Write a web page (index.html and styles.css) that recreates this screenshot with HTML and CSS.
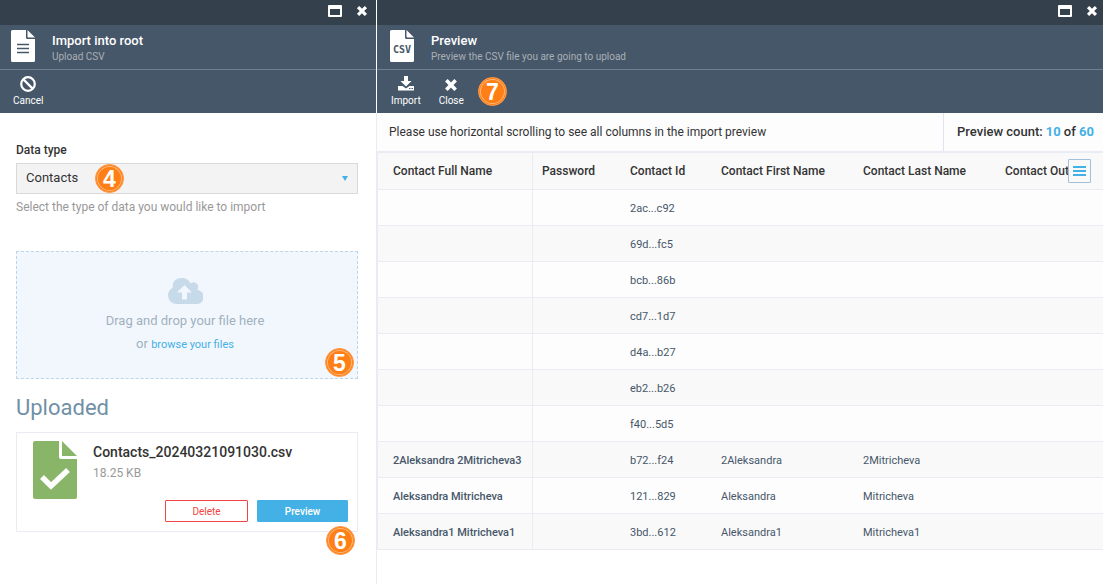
FILE: index.html
```html
<!DOCTYPE html>
<html lang="en">
<head>
<meta charset="utf-8">
<meta name="viewport" content="width=device-width, initial-scale=1">
<title>Import into root</title>
<link rel="stylesheet" href="styles.css">
</head>
<body>
<main class="blades">
  <section class="blade blade-import">
    <header class="blade-head">
      <div class="window-bar">
        <button class="window-btn" type="button" aria-label="Maximize"><svg width="14" height="12" viewBox="0 0 14 12"><path fill="#fff" fill-rule="evenodd" d="M1 0H13Q14 0 14 1V11Q14 12 13 12H1Q0 12 0 11V1Q0 0 1 0ZM2 4V10H12V4Z"/></svg></button>
        <button class="window-btn" type="button" aria-label="Close"><svg width="12" height="12" viewBox="0 0 12 12"><path d="M3.200 3.200L8.800 8.800M8.800 3.200L3.200 8.800" stroke="#fff" stroke-width="3.200" stroke-linecap="square"/></svg></button>
      </div>
      <div class="title-row">
        <svg class="doc-icon" width="24" height="32" viewBox="0 0 24 32"><path fill="#fff" d="M1.500 0H15V7.500Q15 9 16.500 9H24V30.500Q24 32 22.500 32H1.500Q0 32 0 30.500V1.500Q0 0 1.500 0ZM16.500 0L24 7.500H17.500Q16.500 7.500 16.500 6.500Z"/><path d="M6 14.500H18M6 18.500H18M6 22.500H18" stroke="#465769" stroke-width="1.500"/></svg>
        <div class="titles">
          <h1 class="title">Import into root</h1>
          <p class="subtitle">Upload CSV</p>
        </div>
      </div>
      <div class="toolbar">
        <button class="tool" type="button"><svg width="16" height="16" viewBox="0 0 16 16"><circle cx="8" cy="8" r="6.800" fill="none" stroke="#fff" stroke-width="2.200"/><path d="M3.400 3.400L12.600 12.600" stroke="#fff" stroke-width="2.200"/></svg>Cancel</button>
      </div>
    </header>
    <div class="import-body">
      <label class="field-label" for="data-type">Data type</label>
      <div class="select-wrap">
        <select id="data-type" class="select"><option>Contacts</option></select>
        <svg class="caret" width="6" height="5" viewBox="0 0 6 5"><path fill="#43b0e6" d="M0 0H6L3 5Z"/></svg>
        <span class="badge badge-4">4</span>
      </div>
      <p class="hint">Select the type of data you would like to import</p>
      <div class="dropzone">
        <svg width="35" height="26" viewBox="0 0 35 26"><path fill="#c7daea" d="M8.500 26A8.500 8.500 0 0 1 4.600 10Q4 0 14 0Q20 0 22.600 5.500Q25 3.700 27.500 4.700Q31.500 6.500 29.500 12A7 7 0 0 1 28 26Z"/><path fill="#f2f7fd" d="M16.500 7L24 14.500H19V21.500H14V14.500H9Z"/></svg>
        <p class="drop-text">Drag and drop your file here</p>
        <p class="drop-text">or <a class="link" href="#">browse your files</a></p>
        <span class="badge badge-5">5</span>
      </div>
      <h2 class="uploaded">Uploaded</h2>
      <div class="file-card">
        <svg class="file-icon" width="44" height="58" viewBox="0 0 44 58"><path fill="#88b568" d="M2 0H26V16Q26 18 28 18H44V56Q44 58 42 58H2Q0 58 0 56V2Q0 0 2 0ZM29 0L44 15H29Z"/><path d="M9 36L18 45L35 29" fill="none" stroke="#fff" stroke-width="5.500"/></svg>
        <div class="file-info">
          <h3 class="file-name">Contacts_20240321091030.csv</h3>
          <p class="file-size">18.25 KB</p>
          <div class="file-actions">
            <button class="btn btn-delete" type="button">Delete</button>
            <button class="btn btn-preview" type="button">Preview</button>
          </div>
        </div>
        <span class="badge badge-6">6</span>
      </div>
    </div>
  </section>

  <section class="blade blade-preview">
    <header class="blade-head">
      <div class="window-bar">
        <button class="window-btn" type="button" aria-label="Maximize"><svg width="14" height="12" viewBox="0 0 14 12"><path fill="#fff" fill-rule="evenodd" d="M1 0H13Q14 0 14 1V11Q14 12 13 12H1Q0 12 0 11V1Q0 0 1 0ZM2 4V10H12V4Z"/></svg></button>
        <button class="window-btn" type="button" aria-label="Close"><svg width="12" height="12" viewBox="0 0 12 12"><path d="M3.200 3.200L8.800 8.800M8.800 3.200L3.200 8.800" stroke="#fff" stroke-width="3.200" stroke-linecap="square"/></svg></button>
      </div>
      <div class="title-row">
        <svg class="doc-icon" width="24" height="32" viewBox="0 0 24 32"><path fill="#fff" d="M1.500 0H15V7.500Q15 9 16.500 9H24V30.500Q24 32 22.500 32H1.500Q0 32 0 30.500V1.500Q0 0 1.500 0ZM16.500 0L24 7.500H17.500Q16.500 7.500 16.500 6.500Z"/><text class="csv-text" x="12" y="23" text-anchor="middle">CSV</text></svg>
        <div class="titles">
          <h1 class="title">Preview</h1>
          <p class="subtitle">Preview the CSV file you are going to upload</p>
        </div>
      </div>
      <div class="toolbar">
        <button class="tool" type="button"><svg width="16" height="16" viewBox="0 0 16 16"><path fill="#fff" d="M6 0H10V5H13.500L8 10.500L2.500 5H6ZM0 10H4.500L8 12.500L11.500 10H16V14.500H0Z"/><path fill="#465769" d="M11 12H12.500V13H11ZM13.500 12H15V13H13.500Z"/></svg>Import</button>
        <button class="tool" type="button"><svg width="16" height="16" viewBox="0 0 16 16"><path d="M4.600 5.600L11.400 12.400M11.400 5.600L4.600 12.400" stroke="#fff" stroke-width="3.600" stroke-linecap="square"/></svg>Close</button>
        <span class="badge badge-7">7</span>
      </div>
    </header>
    <div class="info-bar">
      <p class="info-text">Please use horizontal scrolling to see all columns in the import preview</p>
      <p class="count"><span>Preview count:</span><span><b>10</b> of <b>60</b></span></p>
    </div>
    <div class="grid">
      <table class="table">
        <colgroup><col class="c-full"><col class="c-pass"><col class="c-id"><col class="c-name"><col class="c-name"><col></colgroup>
        <thead><tr><th>Contact Full Name</th><th>Password</th><th>Contact Id</th><th>Contact First Name</th><th>Contact Last Name</th><th>Contact Out</th></tr></thead>
        <tbody>
          <tr><td></td><td></td><td>2ac...c92</td><td></td><td></td><td></td></tr>
          <tr><td></td><td></td><td>69d...fc5</td><td></td><td></td><td></td></tr>
          <tr><td></td><td></td><td>bcb...86b</td><td></td><td></td><td></td></tr>
          <tr><td></td><td></td><td>cd7...1d7</td><td></td><td></td><td></td></tr>
          <tr><td></td><td></td><td>d4a...b27</td><td></td><td></td><td></td></tr>
          <tr><td></td><td></td><td>eb2...b26</td><td></td><td></td><td></td></tr>
          <tr><td></td><td></td><td>f40...5d5</td><td></td><td></td><td></td></tr>
          <tr><td>2Aleksandra 2Mitricheva3</td><td></td><td>b72...f24</td><td>2Aleksandra</td><td>2Mitricheva</td><td></td></tr>
          <tr><td>Aleksandra Mitricheva</td><td></td><td>121...829</td><td>Aleksandra</td><td>Mitricheva</td><td></td></tr>
          <tr><td>Aleksandra1 Mitricheva1</td><td></td><td>3bd...612</td><td>Aleksandra1</td><td>Mitricheva1</td><td></td></tr>
        </tbody>
      </table>
      <button class="menu-btn" type="button" aria-label="Columns"><svg width="13" height="10" viewBox="0 0 13 10"><path fill="#43b0e6" d="M0 0H13V2H0ZM0 4H13V6H0ZM0 8H13V10H0Z"/></svg></button>
    </div>
  </section>
</main>
</body>
</html>
```

FILE: styles.css
```css
* { box-sizing: border-box; }
body { margin: 0; font-family: Roboto, "Liberation Sans", sans-serif; font-size: 12px; color: #333; background: #fff; }
h1, h2, h3, p { margin: 0; }
button, select { font-family: inherit; }
button { cursor: pointer; }
svg { display: block; flex: none; }

.blades { display: flex; min-height: 100vh; }
.blade { display: flex; flex-direction: column; }
.blade-import { flex: 0 0 377px; border-right: 1px solid #eaecf5; }
.blade-preview { flex: 1; min-width: 0; }
.blade-import .blade-head { border-right: 1px solid #fff; margin-right: -1px; }

.blade-head { background: #465769; color: #fff; }
.window-bar { display: flex; justify-content: flex-end; align-items: center; gap: 14px; height: 25px; padding: 0 8px 4px; background: #34414d; }
.blade-preview .window-bar { padding-right: 5px; }
.window-btn { padding: 0; border: 0; background: none; }
.title-row { display: flex; align-items: center; gap: 17px; height: 45px; padding: 0 11px 2px; border-bottom: 1px solid #6e8094; }
.blade-preview .title-row { padding-left: 13px; }
.titles { padding-top: 6px; }
.title { font-size: 13px; line-height: 16px; font-weight: 500; }
.subtitle { font-size: 10px; line-height: 16px; color: #a9afb6; }
.csv-text { font-family: "DejaVu Sans Mono", monospace; font-size: 10px; font-weight: 700; fill: #465769; }
.toolbar { display: flex; align-items: center; gap: 18px; height: 43px; padding: 0 13px; }
.blade-preview .toolbar { padding: 0 15px 0 14px; }
.tool { display: flex; flex-direction: column; align-items: center; gap: 2px; padding: 0; border: 0; background: none; color: #fff; font-size: 10px; line-height: 14px; }

.badge { display: flex; align-items: center; justify-content: center; width: 29px; height: 29px; border: 1px solid #ff9a48; border-radius: 50%; background: #ff7f15; box-shadow: inset 0 0 0 1px #ff7f15, inset 0 0 0 2px #ffb67a; color: #fff; font: 700 23px/28px "Liberation Sans", Arial, sans-serif; }
.badge-4, .badge-5, .badge-6 { position: absolute; }
.badge-4 { left: 79px; top: 1px; }
.badge-5 { right: 3px; bottom: 1px; }
.badge-6 { right: 2px; bottom: -24px; }
.badge-7 { margin-left: -4px; }

.import-body { padding: 28px 18px 0 16px; }
.field-label { display: block; font-size: 12px; line-height: 18px; font-weight: 500; margin-bottom: 4px; }
.select-wrap { position: relative; }
.select { display: block; width: 100%; height: 31px; padding: 0 9px 2px; border: 1px solid #d9d9d9; border-radius: 0; background: #f3f3f3; appearance: none; font-size: 13px; color: #333; }
.caret { position: absolute; right: 10px; top: 13px; }
.hint { margin-top: 5px; font-size: 12px; line-height: 16px; color: #999; }
.dropzone { position: relative; display: flex; flex-direction: column; align-items: center; height: 128px; margin-top: 36px; padding-top: 26px; padding-right: 4px; border: 1px dashed #bdd5e8; background: #f2f7fd; }
.drop-text { font-size: 13px; line-height: 23px; color: #a1b1be; }
.dropzone svg { margin-bottom: 5px; }
.link { font-size: 11px; font-weight: 400; color: #43b0e6; text-decoration: none; }
.uploaded { margin: 16px 0 11px; font-size: 22px; line-height: 26px; font-weight: 400; color: #7190a6; }
.file-card { position: relative; display: flex; gap: 16px; padding: 8px 9px 9px 16px; border: 1px solid #eaecf5; }
.file-info { flex: 1; }
.file-name { font-size: 14px; line-height: 22px; font-weight: 500; }
.file-size { font-size: 12px; line-height: 20px; color: #999; }
.file-actions { display: flex; justify-content: flex-end; gap: 9px; margin-top: 17px; }
.btn { height: 22px; padding: 0; border: 1px solid; border-radius: 1px; font-size: 10px; }
.btn-delete { width: 83px; border-color: #f34444; background: #fff; color: #f34444; }
.btn-preview { width: 91px; border-color: #43b0e6; background: #43b0e6; color: #fff; font-weight: 500; }

.info-bar { display: flex; height: 40px; border-bottom: 2px solid #eaecf5; background: #fdfdfe; line-height: 38px; }
.info-text { flex: 1; padding-left: 12px; font-size: 12px; }
.count { display: flex; gap: 3px; padding: 0 9px 0 13px; border-left: 1px solid #e0e4ed; font-size: 13px; font-weight: 500; }
.count b { color: #43b0e6; font-weight: 700; }
.grid { position: relative; border-left: 1px solid #eaecf5; overflow: hidden; }
.table { width: 100%; table-layout: fixed; border-collapse: separate; border-spacing: 0; }
.c-full { width: 155px; }
.c-pass { width: 88px; }
.c-id { width: 91px; }
.c-name { width: 142px; }
.table th, .table td { height: 36px; padding: 0 0 0 9px; border-bottom: 1px solid #eaecf5; text-align: left; white-space: nowrap; }
.table th { height: 37px; background: #f9f9f9; font-size: 12px; font-weight: 500; }
.table td { padding-top: 2px; background: #fdfdfd; font-size: 11px; color: #465769; }
.table tr:nth-child(even) td { background: #f9f9f9; }
.table th:first-child, .table td:first-child { padding-left: 15px; border-right: 1px solid #eaecf5; }
.table td:first-child { font-weight: 500; }
.menu-btn { position: absolute; top: 6px; right: 12px; display: flex; align-items: center; justify-content: center; width: 23px; height: 24px; padding: 0; border: 1px solid #a1c0da; border-radius: 1px; background: #f9f9f9; }
```
